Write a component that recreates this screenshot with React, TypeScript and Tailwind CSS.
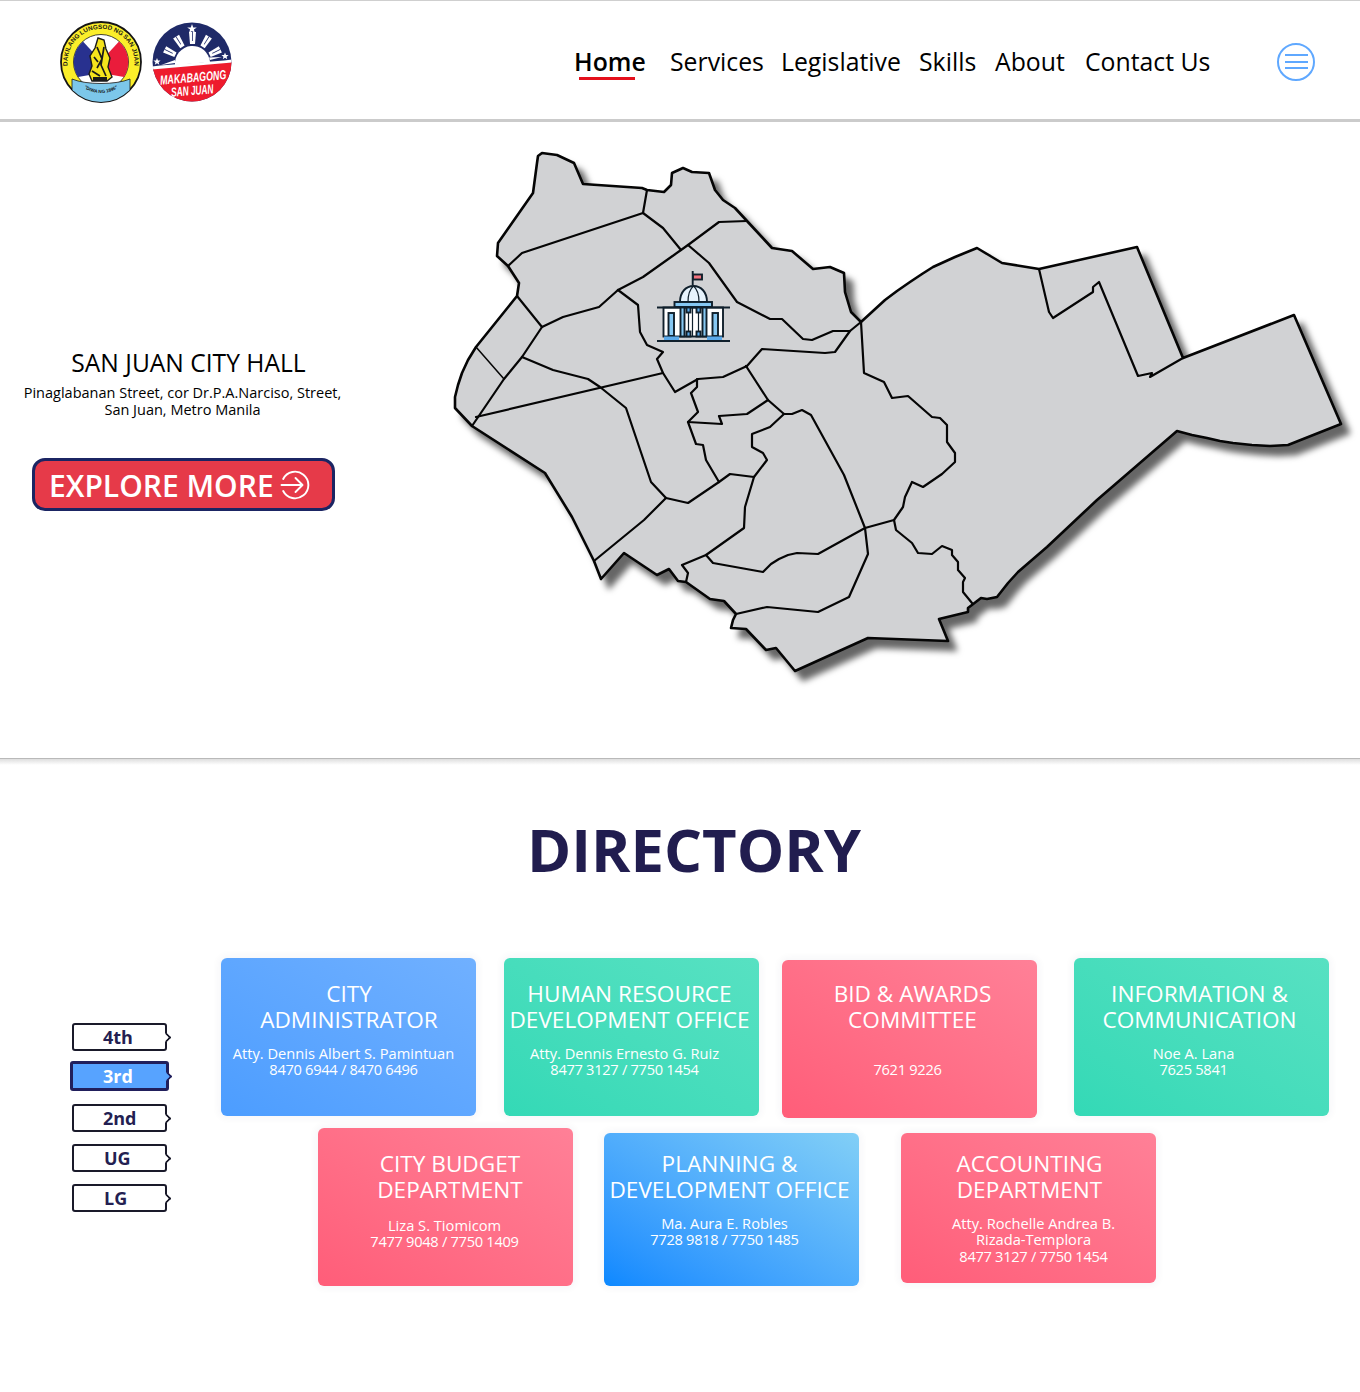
import React from "react";

const OUTER =
  "M537,163 L538,156 L542,153 L557,155 L574,163 L583,184 L642,188 L647,190 L664,192 L671,185 L672,173 L683,168 L692,172 L709,173 L715,190 L723,200 L735,208 L747,221 L772,248 L792,251 L813,269 L830,267 L844,273 L845,292 L851,312 L861,322 L873,311 L885,300 L897,291 L910,282 L922,274 L933,267 L955,257 L977,248 L1002,263 L1039,269 L1137,247 L1183,358 L1294,315 L1341,424 L1288,445 L1270,446 L1252,445 L1233,443 L1220,441 L1207,438 L1192,435 L1177,431 L1097,500 L1047,547 L1018,572 L1008,583 L997,597 L987,599 L981,598 L968,608 L968,612 L939,619 L948,641 L868,638 L795,671 L776,648 L766,650 L746,629 L731,628 L733,620 L736,614 L724,601 L710,599 L686,582 L678,581 L669,569 L657,575 L624,553 L601,579 L594,561 L572,517 L545,473 L472,426 L455,408 L455,397 L458,385 L462,373 L468,360 L476,347 L517,296 L519,283 L508,266 L497,256 L498,243 L533,193 Z";

const LINES = [
  "M508,266 L522,253 L643,213 L647,190",
  "M643,213 L663,228 L681,250",
  "M747,221 L719,222 L688,245 L681,250 L643,277 L618,290 L599,307 L563,317 L542,327 L517,296",
  "M688,245 L709,263 L737,302 L770,319 L782,319 L803,339 L812,340 L833,331 L850,331 L861,322",
  "M850,331 L835,352 L825,353 L762,349 L754,358 L747,366 L723,377 L698,379 L675,392 L663,373 L657,359 L663,352 L647,345 L640,332 L638,305 L618,290",
  "M542,327 L522,357 L504,379 L472,426",
  "M522,357 L553,370 L588,379 L600,387 L626,408 L651,482 L666,498 L688,503 L719,482 L730,474 L754,477 L767,460 L763,453 L752,447 L752,434 L770,427 L784,414",
  "M476,417 L663,373",
  "M666,498 L644,520 L594,561",
  "M697,379 L697,387 L691,393 L698,412 L688,422 L722,424 L719,416 L747,414 L768,400",
  "M746,366 L768,400 L784,414 L792,414 L802,410 L811,415 L844,475 L865,528 L868,554 L849,597 L818,612 L767,607 L736,614",
  "M688,422 L696,444 L703,445 L706,460 L719,482",
  "M754,477 L745,507 L744,528 L706,555 L682,565 L688,573 L686,582",
  "M706,555 L713,563 L763,572 L771,564 L779,559 L788,555 L797,553 L818,554 L865,528",
  "M865,528 L894,520 L903,507 L905,497 L912,482 L923,487 L942,474 L955,462 L955,453 L947,442 L947,425 L940,418 L932,417 L908,396 L892,398 L884,382 L864,373 L861,322",
  "M894,520 L896,530 L912,543 L918,553 L932,554 L942,546 L952,550 L952,555 L958,562 L958,570 L965,578 L963,582 L963,592 L972,603",
  "M1039,269 L1049,312 L1053,318 L1093,292 L1093,287 L1099,282 L1138,376 L1152,373 L1150,377 L1183,358",
];

function CityHallIcon() {
  return (
    <g strokeWidth="1.9" stroke="#10202c" fill="none">
      <path d="M692.7,271 V285" />
      <rect x="693" y="274.5" width="9" height="5" fill="#f2737f" />
      <path d="M680,302 C680,292 686,286 693.5,286 C701,286 707,292 707,302 Z" fill="#e6f3fc" />
      <path d="M688,302 C688,294 690,289 693.5,286 C697,289 699,294 699,302" strokeWidth="1.2" />
      <rect x="674.5" y="302" width="37.5" height="5" fill="#86c8f3" />
      <rect x="663.5" y="307.5" width="59.5" height="29" fill="#ffffff" />
      <path d="M657,307.5 H730" />
      <rect x="668.5" y="313" width="5.5" height="23" fill="#86c8f3" />
      <rect x="712.5" y="313" width="5.5" height="23" fill="#86c8f3" />
      <rect x="680.5" y="307.5" width="4" height="29" fill="#86c8f3" />
      <rect x="702.5" y="307.5" width="4" height="29" fill="#86c8f3" />
      <rect x="686.5" y="307.5" width="4" height="5" fill="#5aa9ea" />
      <rect x="696.5" y="307.5" width="4" height="5" fill="#5aa9ea" />
      <rect x="686.5" y="331.5" width="4" height="5" fill="#5aa9ea" />
      <rect x="696.5" y="331.5" width="4" height="5" fill="#5aa9ea" />
      <path d="M688.5,312 V332 M698.5,312 V332 M692.5,308 V336" strokeWidth="1.2" />
      <rect x="664" y="336.5" width="15" height="4" fill="#5aa9ea" stroke="none" />
      <rect x="707" y="336.5" width="15" height="4" fill="#5aa9ea" stroke="none" />
      <path d="M657,341 H730" />
    </g>
  );
}

function SanJuanMap() {
  return (
    <svg
      viewBox="365 122 995 636"
      className="w-[995px] h-[636px] shrink-0 drop-shadow-[8px_9px_3px_rgba(0,0,0,0.6)]"
    >
      <path d={OUTER} fill="#d1d2d4" stroke="#050505" strokeWidth="2.6" strokeLinejoin="round" />
      <g fill="none" stroke="#050505" strokeWidth="2.2" strokeLinejoin="round" strokeLinecap="round">
        {LINES.map((d) => (
          <path key={d} d={d} />
        ))}
        <path d="M476,347 L504,379" strokeWidth="1.5" />
      </g>
      <CityHallIcon />
    </svg>
  );
}

function SealLogo() {
  return (
    <svg viewBox="0 0 82 82" className="w-[82px] h-[82px] shrink-0">
      <defs>
        <path id="sealTop" d="M12.5,59 A33.5,33.5 0 1 1 69.5,59" />
        <path id="sealBottom" d="M17,60 A30,30 0 0 0 65,60" />
        <clipPath id="sealInner">
          <circle cx="41" cy="41" r="40" />
        </clipPath>
      </defs>
      <circle cx="41" cy="41" r="40" fill="#fbee2a" stroke="#151515" strokeWidth="1.8" />
      <circle cx="41" cy="41" r="27.5" fill="#ffffff" stroke="#151515" strokeWidth="0.8" />
      <path d="M41,40 L23,20.5 A27.5,27.5 0 0 0 18,56 L41,52 Z" fill="#28318f" />
      <path d="M41,40 L59,20.5 A27.5,27.5 0 0 1 64,56 L41,52 Z" fill="#ea1c3b" />
      <g clipPath="url(#sealInner)">
        <path d="M12,58 C26,64 56,64 70,58 L70,84 L12,84 Z" fill="#7cc7ea" stroke="#151515" strokeWidth="0.8" />
      </g>
      <path
        d="M38,17 L44,19 L46,28 L50,37 L48,46 L52,56 L47,60 L32,60 L29,53 L32,45 L30,35 L35,27 Z"
        fill="#f4e31c"
        stroke="#1a1a1a"
        strokeWidth="1.4"
      />
      <path d="M37,26 L42,38 L37,47 M44,26 L41,44 L46,55 M32,50 L40,55 M34,36 L38,41" fill="none" stroke="#1a1a1a" strokeWidth="1.7" />
      <rect x="33" y="56" width="14" height="4" fill="#1a1a1a" />
      <text fontFamily="Liberation Sans, sans-serif" fontSize="6.3" fontWeight="700" fill="#151515">
        <textPath href="#sealTop" startOffset="50%" textAnchor="middle">
          DAKILANG LUNGSOD NG SAN JUAN
        </textPath>
      </text>
      <text fontFamily="Liberation Sans, sans-serif" fontSize="4.6" fontWeight="700" fill="#151515">
        <textPath href="#sealBottom" startOffset="50%" textAnchor="middle">
          "DIWA NG 1896"
        </textPath>
      </text>
    </svg>
  );
}

function MakabagongLogo() {
  const rays = [-64, -32, 0, 32, 64];
  return (
    <svg viewBox="0 0 80 80" className="w-[80px] h-[80px] shrink-0">
      <defs>
        <clipPath id="mkClip">
          <circle cx="40" cy="40" r="39.5" />
        </clipPath>
      </defs>
      <g clipPath="url(#mkClip)">
        <rect width="80" height="80" fill="#1f2a68" />
        <path d="M0,47 L80,40 L80,80 L0,80 Z" fill="#ee1b2d" />
        <path d="M8,43.5 L72,38.5 L80,37.5 L80,40.5 L0,47.5 L0,44.5 Z" fill="#ffffff" />
        <path d="M23,43 A17.5,17.5 0 0 1 58,40 Z" fill="#ffffff" />
        {rays.map((a) => (
          <g key={a} transform={`rotate(${a} 40.5 41)`}>
            <path d="M38,22 L37,10 L44,10 L43,22 Z" fill="#ffffff" />
            <path d="M40.1,10 H40.9 V19 H40.1 Z" fill="#1f2a68" />
          </g>
        ))}
        <path d="M9,43 L23,38 L23,41 Z M70,35 L57,35.5 L58,38 Z" fill="#ffffff" />
      </g>
      <path d="M40,2 L41.2,5.4 L44.8,5.5 L41.9,7.6 L43,11 L40,9 L37,11 L38.1,7.6 L35.2,5.5 L38.8,5.4 Z" fill="#ffffff" />
      <path d="M5,36 L6,38.5 L8.6,38.6 L6.6,40.2 L7.3,42.8 L5,41.3 L2.8,42.8 L3.5,40.2 L1.4,38.6 L4,38.5 Z" fill="#ffffff" />
      <path d="M73,30.5 L74,33 L76.6,33.1 L74.6,34.7 L75.3,37.3 L73,35.8 L70.8,37.3 L71.5,34.7 L69.4,33.1 L72,33 Z" fill="#ffffff" />
      <g transform="rotate(-5 40 60)" fontFamily="Liberation Sans, sans-serif" fontWeight="700" fontStyle="italic" fill="#ffffff" textAnchor="middle">
        <text transform="translate(41.5 60) scale(0.68 1)" fontSize="13">MAKABAGONG</text>
        <text transform="translate(39.5 73) scale(0.64 1)" fontSize="13">SAN JUAN</text>
      </g>
    </svg>
  );
}

function ExploreIcon() {
  return (
    <svg viewBox="0 0 30 30" className="w-[30px] h-[30px] shrink-0" fill="none" stroke="#ffffff" strokeWidth="1.9" strokeLinecap="round" strokeLinejoin="round">
      <path d="M3.2,9 A13.3,13.3 0 1 1 3.2,21" />
      <path d="M1.5,15 H22 M15.5,8 L22.5,15 L15.5,22" />
    </svg>
  );
}

function Header() {
  return (
    <header className="h-[122px] border-t border-b-[3px] border-t-[#cfcfcf] border-b-[#cbcbcb] flex items-center">
      <div className="ml-[60px] flex items-center gap-[10px] mt-[3px]">
        <SealLogo />
        <MakabagongLogo />
      </div>
      <nav className="ml-[342px] flex items-center text-[24.8px] leading-[32px] text-black mt-[1px]">
        <a className="relative font-semibold w-[96px]">
          Home
          <span className="absolute left-[5px] top-[32px] w-[56px] h-[3px] bg-[#e5101c]" />
        </a>
        <a className="w-[111px]">Services</a>
        <a className="w-[138px]">Legislative</a>
        <a className="w-[76px]">Skills</a>
        <a className="w-[90px]">About</a>
        <a className="w-[192px]">Contact Us</a>
      </nav>
      <button className="w-[38px] h-[38px] mt-[3px] rounded-full border-2 border-[#5fa8ff] flex flex-col items-center justify-center gap-[4.5px] shrink-0">
        <span className="w-[23px] h-[2px] bg-[#5fa8ff]" />
        <span className="w-[23px] h-[2px] bg-[#5fa8ff]" />
        <span className="w-[23px] h-[2px] bg-[#5fa8ff]" />
      </button>
    </header>
  );
}

function Hero() {
  return (
    <section className="h-[636px] flex overflow-hidden">
      <div className="w-[365px] shrink-0 flex flex-col items-center text-black pt-[224px]">
        <h2 className="pl-[12px] text-[24.6px] leading-[34px] whitespace-nowrap">SAN JUAN CITY HALL</h2>
        <p className="mt-[4px] text-[14.5px] leading-[17px] text-center whitespace-nowrap">
          Pinaglabanan Street, cor Dr.P.A.Narciso, Street,
          <br />
          San Juan, Metro Manila
        </p>
        <a className="mt-[40px] self-start ml-[32px] w-[303px] h-[53px] pt-[1px] rounded-[13px] border-[3px] border-[#1b2563] bg-[#e63a49] text-white text-[30px] font-semibold flex items-center pl-[14px] gap-[6px] whitespace-nowrap">
          EXPLORE MORE
          <ExploreIcon />
        </a>
      </div>
      <SanJuanMap />
    </section>
  );
}

type CardData = {
  box: string;
  title: string[];
  titleClass: string;
  sub: string[];
  subClass: string;
};

const ROW_ONE: CardData[] = [
  {
    box: "ml-0 mt-0 h-[158px] pt-[23px] bg-gradient-to-tr from-[#4c9dff] to-[#70b0ff]",
    title: ["CITY", "ADMINISTRATOR"],
    titleClass: "pl-[1px]",
    sub: ["Atty. Dennis Albert S. Pamintuan", "8470 6944 / 8470 6496"],
    subClass: "mt-[12px] pr-[10px]",
  },
  {
    box: "ml-[28px] mt-0 h-[158px] pt-[23px] bg-gradient-to-tr from-[#33d9b6] to-[#57e1c2]",
    title: ["HUMAN RESOURCE", "DEVELOPMENT OFFICE"],
    titleClass: "pr-[4px]",
    sub: ["Atty. Dennis Ernesto G. Ruiz", "8477 3127 / 7750 1454"],
    subClass: "mt-[12px] pr-[14px]",
  },
  {
    box: "ml-[23px] mt-[2px] h-[158px] pt-[21px] bg-gradient-to-tr from-[#ff5d79] to-[#ff8097]",
    title: ["BID & AWARDS", "COMMITTEE"],
    titleClass: "pl-[6px]",
    sub: ["\u00a0", "7621 9226"],
    subClass: "mt-[12px] pr-[4px]",
  },
  {
    box: "ml-[37px] mt-0 h-[158px] pt-[23px] bg-gradient-to-tr from-[#33d9b6] to-[#57e1c2]",
    title: ["INFORMATION &", "COMMUNICATION"],
    titleClass: "pr-[4px]",
    sub: ["Noe A. Lana", "7625 5841"],
    subClass: "mt-[12px] pr-[16px]",
  },
];

const ROW_TWO: CardData[] = [
  {
    box: "ml-[97px] mt-0 h-[158px] pt-[23px] bg-gradient-to-tr from-[#ff5d79] to-[#ff8097]",
    title: ["CITY BUDGET", "DEPARTMENT"],
    titleClass: "pl-[9px]",
    sub: ["Liza S. Tiomicom", "7477 9048 / 7750 1409"],
    subClass: "mt-[14px] pr-[2px]",
  },
  {
    box: "ml-[31px] mt-[5px] h-[153px] pt-[18px] bg-gradient-to-tr from-[#0a88ff] to-[#82cff6]",
    title: ["PLANNING &", "DEVELOPMENT OFFICE"],
    titleClass: "pr-[4px]",
    sub: ["Ma. Aura E. Robles", "7728 9818 / 7750 1485"],
    subClass: "mt-[12px] pr-[14px]",
  },
  {
    box: "ml-[42px] mt-[5px] h-[150px] pt-[18px] bg-gradient-to-tr from-[#ff5d79] to-[#ff8097]",
    title: ["ACCOUNTING", "DEPARTMENT"],
    titleClass: "pl-[2px]",
    sub: ["Atty. Rochelle Andrea B.", "Rizada-Templora", "8477 3127 / 7750 1454"],
    subClass: "mt-[12px] pl-[10px]",
  },
];

function Card({ data }: { data: CardData }) {
  return (
    <article
      className={`w-[255px] shrink-0 rounded-[6px] text-white text-center shadow-[0_0_7px_3px_rgba(40,40,80,0.035)] ${data.box}`}
    >
      <h3 className={`text-[22.6px] font-medium leading-[26px] whitespace-nowrap ${data.titleClass}`}>
        {data.title.map((t) => (
          <div key={t}>{t}</div>
        ))}
      </h3>
      <div className={`text-[14.67px] font-medium leading-[16.4px] whitespace-nowrap ${data.subClass}`}>
        {data.sub.map((t) => (
          <div key={t} className={/^\d/.test(t) ? "tracking-[-0.3px]" : ""}>
            {t}
          </div>
        ))}
      </div>
    </article>
  );
}

function FloorTab({ label, active, box, text }: { label: string; active?: boolean; box: string; text: string }) {
  return (
    <div
      className={`relative flex items-center rounded-[3px] font-bold text-[18px] leading-none ${box} ${
        active ? "bg-[#57a3ff] border-[3px] border-[#211f5c] text-white" : "bg-white border-2 border-[#1a1a2a] text-[#241f52]"
      }`}
    >
      <span className={text}>{label}</span>
      <span
        className={`absolute top-1/2 -mt-[3.5px] -right-[5px] w-[7px] h-[7px] rotate-45 rounded-tr-[1px] border-t-2 border-r-2 ${
          active ? "bg-[#57a3ff] border-[#211f5c]" : "bg-white border-[#1a1a2a]"
        }`}
      />
    </div>
  );
}

function Directory() {
  return (
    <section className="pt-[49px] pb-[106px]">
      <h1 className="text-center text-[59.8px] leading-[70px] font-bold text-[#211d4f] pl-[28px]">DIRECTORY</h1>
      <div className="flex mt-[74px]">
        <div className="w-[221px] shrink-0 pt-[65px] pl-[70px] flex flex-col">
          <FloorTab label="4th" box="ml-[2px] w-[95px] h-[28px]" text="pl-[29px]" />
          <FloorTab label="3rd" active box="mt-[10px] w-[99px] h-[30px]" text="pl-[30px]" />
          <FloorTab label="2nd" box="mt-[13px] ml-[2px] w-[95px] h-[28px]" text="pl-[29px]" />
          <FloorTab label="UG" box="mt-[12px] ml-[2px] w-[95px] h-[28px]" text="pl-[30px]" />
          <FloorTab label="LG" box="mt-[12px] ml-[2px] w-[95px] h-[28px]" text="pl-[30px]" />
        </div>
        <div className="flex flex-col">
          <div className="flex items-start h-[170px]">
            {ROW_ONE.map((c) => (
              <Card key={c.title[0]} data={c} />
            ))}
          </div>
          <div className="flex items-start">
            {ROW_TWO.map((c) => (
              <Card key={c.title[0]} data={c} />
            ))}
          </div>
        </div>
      </div>
    </section>
  );
}

export default function App() {
  return (
    <div className="w-[1360px] min-h-[1392px] bg-white font-['Open_Sans',sans-serif] overflow-hidden">
      <Header />
      <Hero />
      <div className="h-[7px] border-t border-t-[#b9b9b9] bg-gradient-to-b from-[#dedede] to-white" />
      <Directory />
    </div>
  );
}
